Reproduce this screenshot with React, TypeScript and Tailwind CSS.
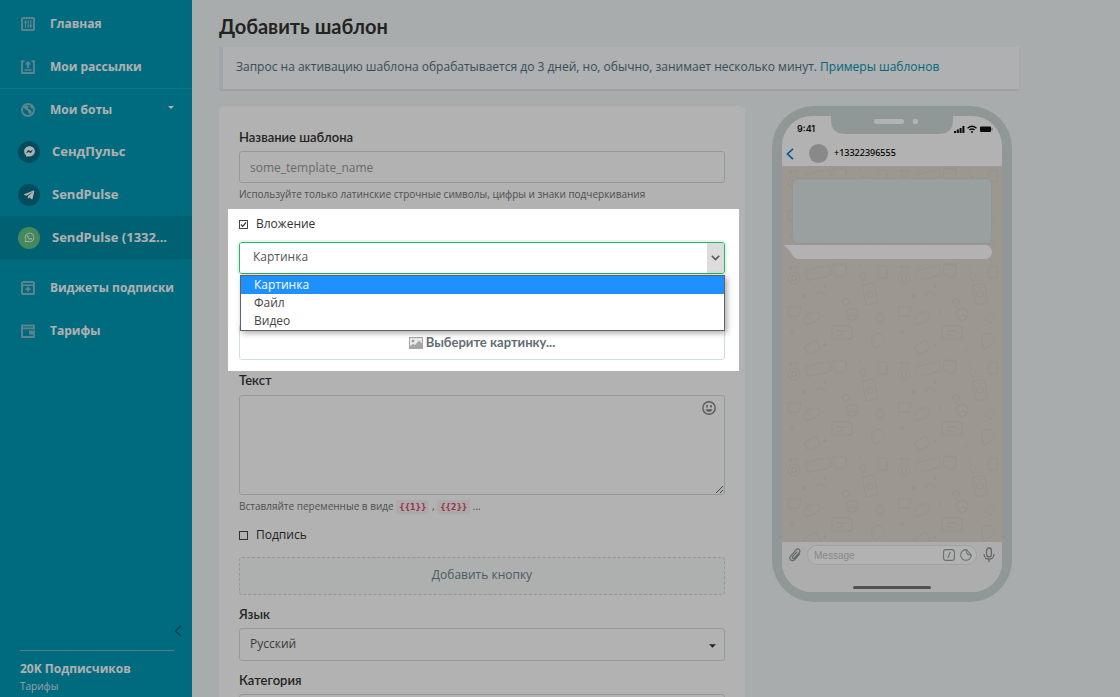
import React from "react";
import { FaTelegramPlane, FaWhatsapp, FaFacebookMessenger } from "react-icons/fa";

const StatsIcon = () => (
  <svg viewBox="0 0 14 14" className="size-[14px]" fill="none" stroke="currentColor">
    <rect x="1" y="1" width="12" height="12" rx="1.5" strokeWidth="2" />
    <path d="M4.5 3v8M7.2 3v8M9.8 3v8" strokeWidth="1.1" />
    <path d="M3.2 5.500h2.600M8.400 8.500h2.800" strokeWidth="1.6" />
  </svg>
);

const CampaignIcon = () => (
  <svg viewBox="0 0 14 14" className="size-[14px]" fill="none" stroke="currentColor">
    <path d="M3.500 1.200H1v11.800h12V1.200h-2.500" strokeWidth="1.900" />
    <path d="M3.500 10h7" strokeWidth="1.600" />
    <path d="M7 8V3" strokeWidth="2.200" />
    <path d="M3.800 4.500 7 .8l3.200 3.700z" fill="currentColor" stroke="none" />
  </svg>
);

const BotsIcon = () => (
  <svg viewBox="0 0 14 14" className="size-[14px]" fill="none" stroke="currentColor">
    <circle cx="7" cy="7" r="6" strokeWidth="1.900" />
    <path d="M2.500 3.500 6 2.200l2 1.200-1.400 2 2.400 1.200 2 2.400-1.400 2.500-2.200-1.600-.6-2.200L3.800 6z" fill="currentColor" stroke="none" />
    <path d="M9.200 2.800l2.400 2.800" strokeWidth="1.600" />
  </svg>
);

const WidgetIcon = () => (
  <svg viewBox="0 0 14 14" className="size-[14px]" fill="none" stroke="currentColor">
    <rect x="1" y="1" width="12" height="12" rx="1.5" strokeWidth="2" />
    <path d="M1.5 4.200h11" strokeWidth="1.600" />
    <path d="M7 5.600v5.200M4.400 8.200h5.200" strokeWidth="1.800" />
  </svg>
);

const WalletIcon = () => (
  <svg viewBox="0 0 14 14" className="size-[14px]" fill="none" stroke="currentColor">
    <path d="M13 5.500V1.500H1v11.500h12v-2.500M1.500 4.400h11.800" strokeWidth="1.900" />
    <rect x="8" y="6.500" width="6" height="4" fill="currentColor" stroke="none" />
  </svg>
);

const SmileIcon = () => (
  <svg viewBox="0 0 14 14" className="size-[14px]" fill="none" stroke="currentColor">
    <circle cx="7" cy="7" r="6.2" strokeWidth="1.4" />
    <path d="M5 4v2.4M9 4v2.4" strokeWidth="1.6" />
    <path d="M3.6 8.2h6.8C9.800 10 8.600 10.800 7 10.800S4.200 10 3.600 8.200z" fill="currentColor" stroke="none" />
  </svg>
);

const Caret = ({ className }: { className: string }) => (
  <svg viewBox="0 0 8 4" className={className} fill="currentColor" aria-hidden="true">
    <path d="M0 0h8L4 4z" />
  </svg>
);

type NavProps = { icon: React.ReactNode; label: string; caret?: boolean };

const NavItem = ({ icon, label, caret }: NavProps) => (
  <a href="#" className="flex h-[43px] w-full items-center pr-[18px] pl-[21px] text-xs font-bold text-[#fdfdfd]">
    <span className="w-[29px] text-[#86bdc9]">{icon}</span>
    <span className="flex-1 whitespace-nowrap">{label}</span>
    {caret && <Caret className="mb-1 h-[3px] w-[6px] text-white" />}
  </a>
);

const BotItem = ({ icon, label, active }: { icon: React.ReactNode; label: string; active?: boolean }) => (
  <a
    href="#"
    className={
      active
        ? "flex h-[43px] items-center gap-3 bg-[#008ba5] pl-[18px] text-[13px] font-bold text-[#fdfdfd]"
        : "flex h-[43px] items-center gap-3 pl-[18px] text-[13px] font-bold text-[#fdfdfd]"
    }
  >
    <span
      className={
        active
          ? "flex size-[22px] items-center justify-center rounded-full bg-[#62c587] text-[#f0fff5]"
          : "flex size-[22px] items-center justify-center rounded-full bg-[#006e84] text-white"
      }
    >
      {icon}
    </span>
    {label}
  </a>
);

const Sidebar = () => (
  <aside className="flex h-full w-48 shrink-0 flex-col bg-[#0099b7]">
    <nav className="pt-[2px]">
      <NavItem icon={<StatsIcon />} label="Главная" />
      <NavItem icon={<CampaignIcon />} label="Мои рассылки" />
      <div className="flex h-[42px] items-center border-t border-[#1aa5bf]">
        <NavItem icon={<BotsIcon />} label="Мои боты" caret />
      </div>
      <BotItem icon={<FaFacebookMessenger size={11} />} label="СендПульс" />
      <BotItem icon={<FaTelegramPlane size={12} />} label="SendPulse" />
      <BotItem icon={<FaWhatsapp size={11} />} label="SendPulse (1332..." active />
      <div className="pt-[7px]">
        <NavItem icon={<WidgetIcon />} label="Виджеты подписки" />
        <NavItem icon={<WalletIcon />} label="Тарифы" />
      </div>
    </nav>
    <div className="mt-auto px-[18px]">
      <div className="-mr-2 flex justify-end pb-[13px]">
        <button type="button" aria-label="Свернуть меню" className="text-[#006076]">
          <svg viewBox="0 0 8 12" className="h-3 w-2" fill="none" stroke="currentColor" strokeWidth="1.3">
            <path d="M7 .8 1.400 6 7 11.200" />
          </svg>
        </button>
      </div>
      <div className="ml-[2px] border-t border-[#74b6c3] pt-[9px] pb-[3px]">
        <p className="text-xs leading-[18px] font-bold text-[#fdfdfd]">20K Подписчиков</p>
        <a href="#" className="block text-[10px] leading-4 text-[#d8eaee]">
          Тарифы
        </a>
      </div>
    </div>
  </aside>
);

const Check = ({ id, label, checked }: { id: string; label: string; checked?: boolean }) => (
  <div className="flex h-5 items-center gap-2">
    <span className="grid size-[9px] place-items-center">
      <input
        id={id}
        type="checkbox"
        defaultChecked={checked}
        className="peer col-start-1 row-start-1 size-[9px] appearance-none border border-[#444] bg-white"
      />
      <svg
        viewBox="0 0 9 9"
        className="pointer-events-none invisible col-start-1 row-start-1 size-[9px] peer-checked:visible"
        fill="none"
        stroke="#333"
        strokeWidth="1.2"
      >
        <path d="M2 4.500 3.700 6.300 7 2.500" />
      </svg>
    </span>
    <label htmlFor={id} className="text-xs text-[#333]">
      {label}
    </label>
  </div>
);

const Dropdown = ({ id, label, value }: { id: string; label: string; value: string }) => (
  <div className="mt-[10px]">
    <label htmlFor={id} className="block font-['Lato','Noto_Sans',sans-serif] text-[13px] leading-[18px] font-semibold text-[#333]">
      {label}
    </label>
    <div className="mt-[5px] grid items-center">
      <select
        id={id}
        className="col-start-1 row-start-1 h-[33px] w-full appearance-none rounded-[3px] border border-[#cfdfdc] bg-white px-[10px] pb-[2px] text-xs text-[#555]"
      >
        <option>{value}</option>
      </select>
      <Caret className="pointer-events-none col-start-1 row-start-1 mt-[2px] mr-[9px] h-[4px] w-[7px] justify-self-end text-[#333]" />
    </div>
  </div>
);

const Attachment = () => (
  <div className="relative mt-[11px]">
    <div
      aria-hidden="true"
      className="pointer-events-none absolute -top-[5px] -right-[14px] -bottom-[11px] -left-[11px] z-50 shadow-[0_0_0_2000px_rgba(0,0,0,0.3)]"
    />
    <Check id="attachment" label="Вложение" checked />
    <div className="relative mt-2">
      <div className="flex h-8 overflow-hidden rounded-[3px] border border-[#28b26b] shadow-[0_0_0_2px_rgba(40,190,110,0.12)]">
        <select aria-label="Тип вложения" className="min-w-0 flex-1 appearance-none bg-white px-[13px] pb-[2px] text-xs text-[#555]">
          <option>Картинка</option>
          <option>Файл</option>
          <option>Видео</option>
        </select>
        <span className="flex w-[17px] items-center justify-center bg-[#dcdcdc] text-[#555]">
          <svg viewBox="0 0 9 6" className="h-[6px] w-[9px]" fill="none" stroke="currentColor" strokeWidth="1.6">
            <path d="M.8.800 4.500 4.500 8.200.800" />
          </svg>
        </span>
      </div>
      <ul
        role="listbox"
        aria-label="Тип вложения"
        className="absolute top-[33px] right-0 left-px z-10 border border-[#5f6366] bg-white text-xs leading-[18px] text-[#444] shadow-[2px_2px_6px_rgba(0,0,0,0.35)]"
      >
        <li role="option" aria-selected="true" className="h-[18px] bg-[#1e90ff] px-[13px] text-white">
          Картинка
        </li>
        <li role="option" aria-selected="false" className="h-[18px] px-[13px]">
          Файл
        </li>
        <li role="option" aria-selected="false" className="h-[18px] px-[13px]">
          Видео
        </li>
      </ul>
    </div>
    <button
      type="button"
      className="mt-[50px] flex h-9 w-full items-center justify-center gap-[3px] rounded-[3px] border border-[#cfdfdc] pt-[2px] font-['Lato','Noto_Sans',sans-serif] text-[13px] font-bold text-[#616e74]"
    >
      <svg viewBox="0 0 14 12" className="h-3 w-[14px]" aria-hidden="true">
        <rect x=".5" y=".5" width="13" height="11" fill="#e8e8e8" stroke="#a5a5a5" />
        <circle cx="4" cy="4" r="1.300" fill="#999" />
        <path d="M1 11V9l3-2 2 1 4-4.500 3 3V11z" fill="#a5a5a5" />
      </svg>
      Выберите картинку...
    </button>
  </div>
);

const Code = ({ children }: { children: React.ReactNode }) => (
  <code className="rounded-[3px] bg-[#f9f2f4] px-[3px] py-[2px] font-['DejaVu_Sans_Mono',monospace] text-[9px] font-bold text-[#d6486a]">
    {children}
  </code>
);

const TemplateForm = () => (
  <form className="min-w-0 flex-1 rounded-t-[5px] bg-white px-5 pt-[22px] pb-10">
    <label htmlFor="name" className="block font-['Lato','Noto_Sans',sans-serif] text-[13px] leading-[18px] font-semibold text-[#333]">
      Название шаблона
    </label>
    <input
      id="name"
      placeholder="some_template_name"
      className="mt-[5px] block h-8 w-full rounded-[3px] border border-[#cfdfdc] bg-white px-[10px] text-xs placeholder:text-[#999]"
    />
    <p className="mt-[2px] text-[10px] leading-[18px] text-[#737373]">
      Используйте только латинские строчные символы, цифры и знаки подчеркивания
    </p>

    <Attachment />

    <label htmlFor="text" className="mt-[11px] block font-['Lato','Noto_Sans',sans-serif] text-[13px] leading-[18px] font-semibold text-[#333]">
      Текст
    </label>
    <div className="relative mt-[6px]">
      <textarea
        id="text"
        className="block h-[100px] w-full resize rounded-[3px] border border-[#cfdfdc] bg-white p-[10px] text-xs text-[#555]"
      />
      <button type="button" aria-label="Эмодзи" className="absolute top-[6px] right-[9px] text-[#848484]">
        <SmileIcon />
      </button>
    </div>
    <p className="mt-[2px] h-[18px] text-[10px] leading-[18px] text-[#737373]">
      Вставляйте переменные в виде <Code>{"{{1}}"}</Code> , <Code>{"{{2}}"}</Code> ...
    </p>

    <div className="mt-[10px]">
      <Check id="signature" label="Подпись" />
    </div>
    <button
      type="button"
      className="mt-3 block h-[38px] w-full rounded-[3px] border border-dashed border-[#cbdcd9] bg-[#fafcfc] pb-[2px] text-xs text-[#6b858f]"
    >
      Добавить кнопку
    </button>

    <Dropdown id="language" label="Язык" value="Русский" />
    <Dropdown id="category" label="Категория" value="" />
  </form>
);

const Wallpaper = () => (
  <svg className="absolute inset-0 h-full w-full" aria-hidden="true">
    <defs>
      <pattern id="doodles" width="110" height="96" patternUnits="userSpaceOnUse">
        <g fill="none" stroke="#d8d2c9" strokeWidth="1.100">
          <rect x="24" y="6" width="25" height="10" rx="2" transform="rotate(-14 36 11)" />
          <rect x="82" y="22" width="12" height="20" rx="2" transform="rotate(-10 88 32)" />
          <circle cx="88" cy="32" r="3" />
          <circle cx="12" cy="16" r="6" />
          <circle cx="12" cy="16" r="2.500" />
          <path d="M10 9 8 5h8l-2 4" />
          <path d="M51 3h13v8c0 5-10 5-12 0zM56 0v3M60 0v3" />
          <circle cx="70" cy="52" r="6" />
          <path d="M66 55c3-3 7-2 9 0" />
          <rect x="50" y="64" width="20" height="13" rx="2" />
          <path d="M54 69h11M54 73h7" />
          <ellipse cx="30" cy="56" rx="9" ry="5" transform="rotate(-30 30 56)" />
          <path d="M6 45h13l-2 9H7zM22 85l12-7 5 10-13 4zM77 14l3-4 4 3-3 6zM98 50l5 6-4 5-6-4z" />
          <path d="M90 76c4-8 14-4 12 4l-9 7c-3-2-4-6-3-11zM60 39l4-3 4 4-5 5zM33 34c3-6 8-5 10 0" />
          <rect x="96" y="4" width="9" height="12" rx="2" />
        </g>
        <g fill="#d8d2c9">
          <circle cx="43" cy="24" r="1.500" />
          <circle cx="4" cy="34" r="1.500" />
          <circle cx="78" cy="4" r="1.300" />
          <circle cx="48" cy="50" r="1.500" />
          <circle cx="84" cy="66" r="1.500" />
          <circle cx="10" cy="70" r="1.500" />
          <circle cx="74" cy="88" r="1.300" />
          <path d="m22 31 1 2 2 1-2 1-1 2-1-2-2-1 2-1zM43 80l1 2 2 1-2 1-1 2-1-2-2-1 2-1z" />
        </g>
      </pattern>
    </defs>
    <rect width="100%" height="100%" fill="#e1d9d0" />
    <rect width="100%" height="100%" fill="url(#doodles)" />
  </svg>
);

const Phone = () => (
  <section
    aria-label="Предпросмотр"
    className="flex h-[496px] w-60 shrink-0 rounded-[42px] bg-[#cedad8] p-[10px]"
  >
    <div className="flex flex-1 flex-col overflow-hidden rounded-[30px] bg-white">
      <div className="relative flex h-[26px] items-end justify-between pr-[9px] pl-[15px]">
        <svg viewBox="0 0 122 18" className="absolute top-0 left-[49px] h-[18px] w-[122px]" aria-hidden="true">
          <path d="M-4 0Q0 0 0 4 0 18 15 18h92Q122 18 122 4q0-4 4-4z" fill="#cedad8" />
          <rect x="43" y="3" width="30" height="5" rx="2.500" fill="#fff" />
          <circle cx="84.500" cy="5.500" r="2.700" fill="#fff" />
        </svg>
        <span className="font-['Inter',sans-serif] text-[9px] leading-[26px] font-semibold text-[#111]">9:41</span>
        <svg viewBox="0 0 40 8" className="mb-[9px] h-2 w-10" aria-hidden="true">
          <path d="M1 6h2v2H1zM3.800 4.500h2V8h-2zM6.600 3h2v5h-2zM9.400 1h2v7h-2z" fill="#111" />
          <path d="M14.500 3.200c2.700-2.400 6.300-2.400 9 0M16.400 5.100c1.600-1.400 3.600-1.400 5.200 0" fill="none" stroke="#111" strokeWidth="1.300" />
          <circle cx="19" cy="7" r="1" fill="#111" />
          <rect x="27" y="1.500" width="11" height="5.600" rx="1" fill="#111" />
          <path d="M39 3.200v2.200" stroke="#777" />
        </svg>
      </div>
      <div className="flex h-6 items-center pb-[2px] pl-1">
        <svg viewBox="0 0 8 12" className="mt-[2px] h-3 w-2" fill="none" stroke="#007fd6" strokeWidth="1.600" aria-hidden="true">
          <path d="M7 .8 1.400 6 7 11.200" />
        </svg>
        <span className="ml-[15px] size-[19px] rounded-full bg-[#c4c4c4]" />
        <span className="ml-[6px] font-['Noto_Sans',sans-serif] text-[9px] font-medium text-black">+13322396555</span>
      </div>
      <div className="relative flex-1">
        <Wallpaper />
        <div className="relative px-[10px] pt-3">
          <div className="h-[66px] rounded-[6px] border border-[#d0d6d5] bg-[#dbe5e4]" />
          <div className="-ml-2 mt-px flex h-[14px]">
            <svg viewBox="0 0 16 14" className="h-[14px] w-4" aria-hidden="true">
              <path d="M0 0h16v14h-1Q11 14 8 9.500L6 6z" fill="#fff" />
            </svg>
            <span className="-ml-px flex-1 rounded-r-full bg-white" />
          </div>
        </div>
      </div>
      <div className="flex h-[50px] flex-col items-center bg-[#f8f8f8]">
        <div className="mt-[3px] flex w-full items-center pr-[7px] pl-[6px]">
          <svg viewBox="0 0 14 16" className="h-4 w-[14px]" fill="none" stroke="#8d9596" strokeWidth="1.200" strokeLinecap="round" aria-hidden="true">
            <path d="m11.500 7-4.800 5.500c-2.600 2.800-6.500-.2-4.200-3.200L8 2.800c2-2.200 5.200.2 3.400 2.600L6.500 11c-1.200 1.300-2.900 0-1.900-1.300L9 4.800" />
          </svg>
          <div className="mr-[6px] ml-[5px] flex h-[20px] min-w-0 flex-1 items-center gap-[5px] rounded-full border border-[#e4e8e8] bg-white pr-[4px] pl-[6px]">
            <input
              aria-label="Message"
              placeholder="Message"
              className="min-w-0 flex-1 font-['Liberation_Sans',sans-serif] text-[10px] placeholder:text-[#c0c4c5]"
            />
            <svg viewBox="0 0 12 12" className="size-3" fill="none" stroke="#989fa1" strokeWidth="1.100" aria-hidden="true">
              <rect x=".6" y=".6" width="10.800" height="10.800" rx="2.500" />
              <path d="M7.300 3 4.700 9" />
            </svg>
            <svg viewBox="0 0 12 12" className="size-3" fill="none" stroke="#989fa1" strokeWidth="1.100" aria-hidden="true">
              <path d="M6.500.700a5.300 5.300 0 1 0 4.800 5.300M6.500.700C6 4 7 6.300 11.300 6M6.500.700l4.800 5.300" />
            </svg>
          </div>
          <svg viewBox="0 0 12 16" className="h-4 w-3" fill="none" stroke="#8d9596" strokeWidth="1.300" aria-hidden="true">
            <rect x="3.600" y="1" width="4.800" height="9" rx="2.400" />
            <path d="M1 7c0 7 10 7 10 0M6 12.300V15" />
          </svg>
        </div>
        <span className="mt-[21px] h-[3px] w-[78px] rounded-full bg-[#757575]" />
      </div>
    </div>
  </section>
);

export default function App() {
  return (
    <div className="relative flex h-screen overflow-hidden bg-[#f3f7f6] font-['Open_Sans','Noto_Sans',sans-serif]">
      <Sidebar />
      <main className="min-w-0 flex-1 pr-[101px] pl-[27px]">
        <h1 className="pt-[13px] font-['Lato','Noto_Sans',sans-serif] text-xl leading-[26px] font-bold text-[#333]">
          Добавить шаблон
        </h1>
        <p className="mt-2 h-11 border-b-2 border-l-4 border-b-[#e2e9ed] border-l-[#e4edf2] bg-[#f9fcfe] pl-[13px] text-xs leading-[40px] text-[#4f7180]">
          Запрос на активацию шаблона обрабатывается до 3 дней, но, обычно, занимает несколько минут.{" "}
          <a href="#" className="text-[#0095ae]">
            Примеры шаблонов
          </a>
        </p>
        <div className="mt-[15px] flex items-start gap-[27px] pr-[7px]">
          <TemplateForm />
          <Phone />
        </div>
      </main>
    </div>
  );
}
